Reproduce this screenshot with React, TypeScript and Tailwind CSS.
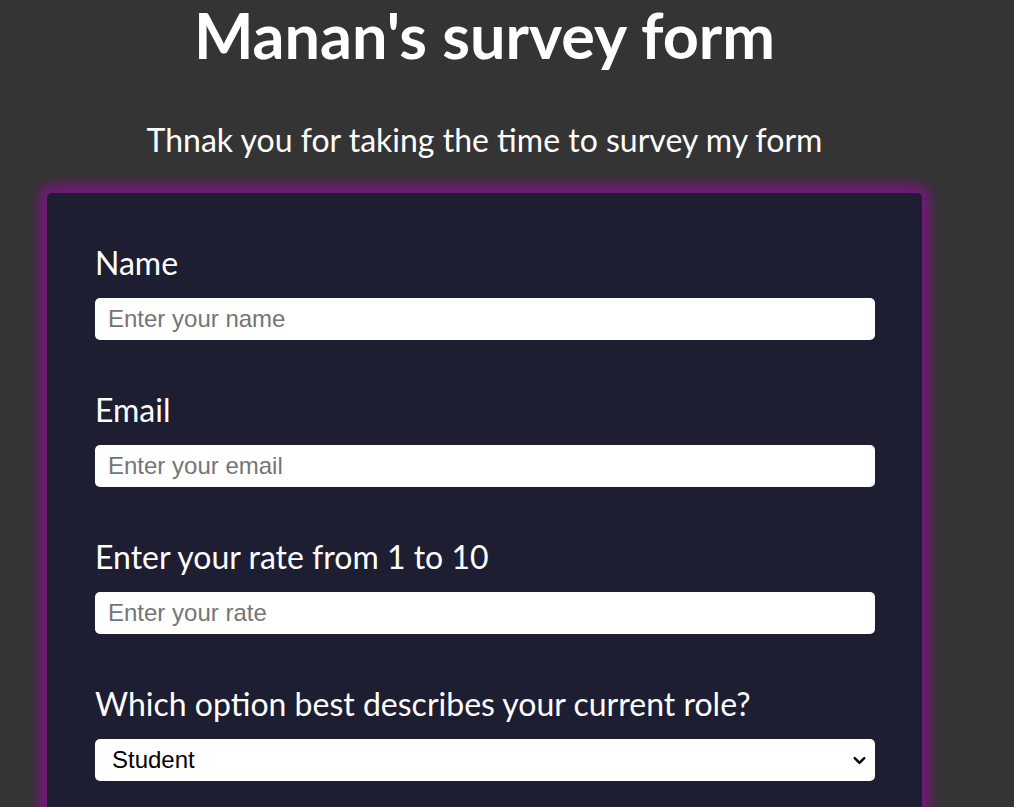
import React from 'react';
import { ChevronDown } from 'lucide-react';

const fields = [
  { id: 'name', label: 'Name', placeholder: 'Enter your name', type: 'text' },
  { id: 'email', label: 'Email', placeholder: 'Enter your email', type: 'email' },
  { id: 'number', label: 'Enter your rate from 1 to 10', placeholder: 'Enter your rate', type: 'number' },
];

export default function App() {
  return (
    <div className="min-h-screen bg-[#343434] text-white overflow-hidden font-['Lato',sans-serif]">
      <div className="w-[875px] ml-[47px]">
        <h1 className="text-center text-[63px] font-bold leading-[70px]">Manan's survey form</h1>
        <p className="text-center text-[32px] leading-[40px] mt-[50px]">Thnak you for taking the time to survey my form</p>

        <form className="mt-[33px] bg-[#1e1e33] rounded-[5px] shadow-[0_0_14px_7px_#7d1585] px-[48px] pt-[50px] pb-[50px]">
          {fields.map((f) => (
            <div key={f.id} className="mb-[50px]">
              <label htmlFor={f.id} className="block text-[32px] leading-[40px] mb-[15px]">
                {f.label}
              </label>
              <input
                id={f.id}
                type={f.type}
                placeholder={f.placeholder}
                className="block w-[780px] h-[42px] rounded-[5px] bg-white px-[13px] text-[24px] text-black placeholder:text-[#757575] outline-none font-['Liberation_Sans',sans-serif]"
              />
            </div>
          ))}
          <div>
            <label htmlFor="role" className="block text-[32px] leading-[40px] mb-[15px]">
              Which option best describes your current role?
            </label>
            <div className="relative w-[780px]">
              <select
                id="role"
                className="block w-full h-[42px] appearance-none rounded-[5px] bg-white pl-[17px] pr-[30px] text-[24px] text-black outline-none font-['Liberation_Sans',sans-serif]"
              >
                <option>Student</option>
                <option>Full Time Job</option>
                <option>Full Time Learner</option>
                <option>Prefer not to say</option>
                <option>Other</option>
              </select>
              <ChevronDown className="absolute right-[6px] top-[12px] w-[19px] h-[19px] text-black pointer-events-none" strokeWidth={3} />
            </div>
          </div>
        </form>
      </div>
    </div>
  );
}
